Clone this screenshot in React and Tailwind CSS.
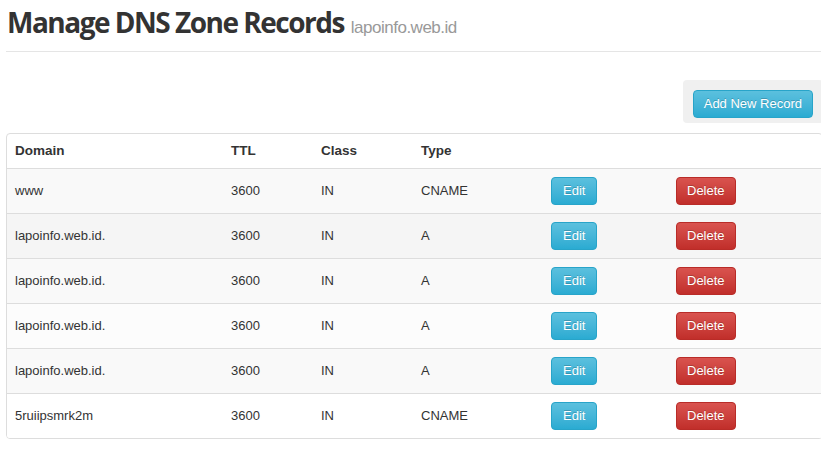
import React from "react";

const rows = [
  { d: "www", t: "3600", c: "IN", ty: "CNAME", bg: "bg-[#f9f9f9]" },
  { d: "lapoinfo.web.id.", t: "3600", c: "IN", ty: "A", bg: "bg-[#f5f5f5]" },
  { d: "lapoinfo.web.id.", t: "3600", c: "IN", ty: "A", bg: "bg-[#f9f9f9]" },
  { d: "lapoinfo.web.id.", t: "3600", c: "IN", ty: "A", bg: "bg-[#fcfcfc]" },
  { d: "lapoinfo.web.id.", t: "3600", c: "IN", ty: "A", bg: "bg-[#f9f9f9]" },
  { d: "5ruiipsmrk2m", t: "3600", c: "IN", ty: "CNAME", bg: "bg-white" },
];

export default function App() {
  return (
    <div className="w-[821px] h-[449px] overflow-hidden bg-white text-[#333] font-['Liberation_Sans',Arial,sans-serif] text-[13px]">
      <div className="ml-[6px] w-[817px]">
        <div className="h-[51px] pt-[5px]">
          <div className="flex items-baseline h-[34px]">
            <h1 className="font-['Open_Sans',sans-serif] font-bold text-[28px] leading-[34px] tracking-[-1.5px] text-[#333] ml-[1px]">
              Manage DNS Zone Records
            </h1>
            <span className="ml-[7px] text-[17px] text-[#999] tracking-[-0.5px]">lapoinfo.web.id</span>
          </div>
        </div>
        <div className="border-t border-[#e5e5e5]"></div>
        <div className="mt-[28px] flex justify-end">
          <div className="bg-[#f0f0f0] rounded-[4px] pt-[10px] pb-[5px] pl-[10px] pr-[10px]">
            <button className="block h-[28px] px-[10px] rounded-[4px] border border-[#28a4c9] bg-gradient-to-b from-[#5bc0de] to-[#2aabd2] text-white text-[13px] leading-[26px] [text-shadow:0_-1px_0_rgba(0,0,0,0.2)]">
              Add New Record
            </button>
          </div>
        </div>
        <div className="mt-[10px] border border-[#ddd] rounded-[4px] overflow-hidden">
          <table className="w-full table-fixed border-collapse">
            <colgroup>
              <col className="w-[216px]" />
              <col className="w-[90px]" />
              <col className="w-[100px]" />
              <col className="w-[130px]" />
              <col className="w-[125px]" />
              <col />
            </colgroup>
            <thead>
              <tr className="h-[34px]">
                <th className="text-left font-bold text-[13.5px] px-[8px]">Domain</th>
                <th className="text-left font-bold text-[13.5px] px-[8px]">TTL</th>
                <th className="text-left font-bold text-[13.5px] px-[8px]">Class</th>
                <th className="text-left font-bold text-[13.5px] px-[8px]">Type</th>
                <th></th>
                <th></th>
              </tr>
            </thead>
            <tbody>
              {rows.map((r, i) => (
                <tr key={i} className={`h-[45px] border-t border-[#ddd] ${r.bg}`}>
                  <td className="px-[8px]">{r.d}</td>
                  <td className="px-[8px]">{r.t}</td>
                  <td className="px-[8px]">{r.c}</td>
                  <td className="px-[8px]">{r.ty}</td>
                  <td className="px-[8px]">
                    <button className="block h-[28px] px-[11px] rounded-[4px] border border-[#28a4c9] bg-gradient-to-b from-[#5bc0de] to-[#2aabd2] text-white text-[13px] leading-[26px] [text-shadow:0_-1px_0_rgba(0,0,0,0.2)]">
                      Edit
                    </button>
                  </td>
                  <td className="px-[8px]">
                    <button className="block h-[28px] px-[10px] rounded-[4px] border border-[#b92c28] bg-gradient-to-b from-[#d9534f] to-[#c12e2a] text-white text-[13px] leading-[26px] [text-shadow:0_-1px_0_rgba(0,0,0,0.2)]">
                      Delete
                    </button>
                  </td>
                </tr>
              ))}
            </tbody>
          </table>
        </div>
      </div>
    </div>
  );
}
